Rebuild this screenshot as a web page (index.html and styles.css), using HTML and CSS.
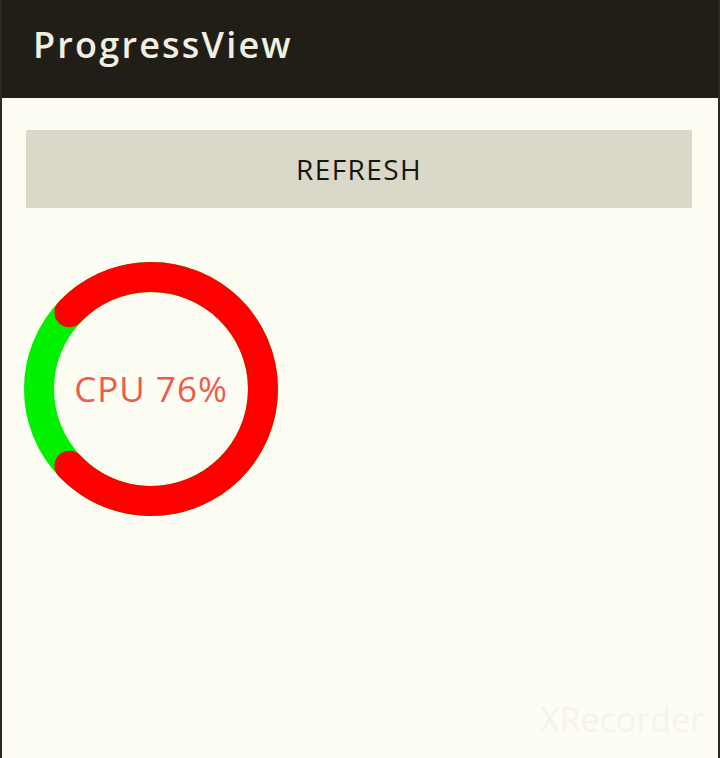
FILE: index.html
```html
<!DOCTYPE html>
<html>
<head>
<meta charset="utf-8">
<link rel="stylesheet" href="styles.css">
</head>
<body>
<div class="screen">
  <header class="appbar"><span class="title">ProgressView</span></header>
  <main class="content">
    <button class="refresh">REFRESH</button>
    <div class="gauge">
      <svg class="ring" width="256" height="256" viewBox="0 0 256 256">
        <circle cx="128" cy="128" r="112" fill="none" stroke="#00f000" stroke-width="30"/>
        <path d="M 46.4 204.7 A 112 112 0 1 0 46.4 51.3" fill="none" stroke="#ff0000" stroke-width="30" stroke-linecap="round"/>
      </svg>
      <span class="label">CPU 76%</span>
    </div>
  </main>
  <div class="watermark">XRecorder</div>
</div>
</body>
</html>
```
FILE: styles.css
```css
html, body {
  margin: 0;
  padding: 0;
}
body {
  width: 720px;
  height: 758px;
  overflow: hidden;
  background: #fefdf3;
  font-family: "Open Sans", "Lato", sans-serif;
}
.screen {
  position: relative;
  width: 720px;
  height: 758px;
  box-sizing: border-box;
  border-left: 2px solid #2a2820;
  border-right: 2px solid #2a2820;
  display: flex;
  flex-direction: column;
}
.appbar {
  height: 98px;
  background: #201e17;
  display: flex;
  align-items: center;
  padding-left: 31px;
  flex: none;
}
.title {
  color: #f1efe1;
  font-size: 36px;
  font-weight: 600;
  letter-spacing: 2.2px;
  margin-top: -10px;
}
.content {
  padding: 32px 26px 0 24px;
  display: flex;
  flex-direction: column;
}
.refresh {
  height: 78px;
  width: 666px;
  border: none;
  background: #d9d8c9;
  color: #17170f;
  font-family: "Open Sans", sans-serif;
  font-size: 28px;
  font-weight: 500;
  letter-spacing: 1.4px;
  padding: 0;
  margin: 0;
}
.gauge {
  position: relative;
  width: 256px;
  height: 256px;
  margin-top: 53px;
  margin-left: -3px;
}
.ring {
  display: block;
}
.label {
  position: absolute;
  inset: 0;
  display: flex;
  align-items: center;
  justify-content: center;
  color: #f05a4a;
  font-size: 35px;
  font-weight: 400;
  letter-spacing: 1px;
  padding-bottom: 2px;
}
.watermark {
  position: absolute;
  right: 14px;
  bottom: 16px;
  font-family: "Open Sans", sans-serif;
  font-size: 34px;
  color: #f5f3ee;
  letter-spacing: 0;
}
```
